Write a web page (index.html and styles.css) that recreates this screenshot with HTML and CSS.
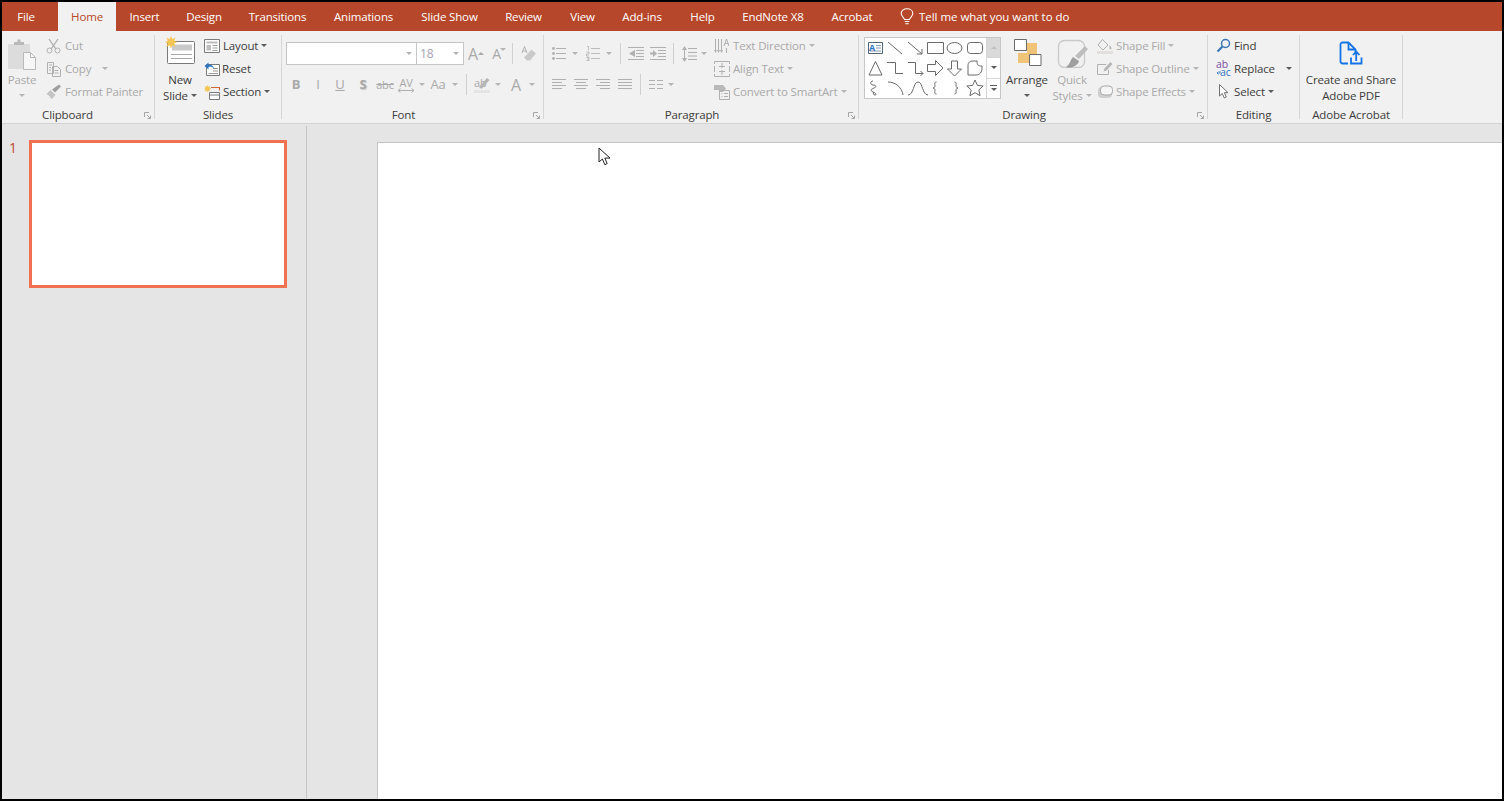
FILE: index.html
```html
<!DOCTYPE html>
<html lang="en">
<head>
    <meta charset="UTF-8">
    <title>PowerPoint</title>
    <link rel="stylesheet" href="styles.css">
</head>
<body>
<div class="app">
    <!-- Tab bar -->
    <nav class="tabs">
        <span class="tab">File</span>
        <span class="tab tab-home">Home</span>
        <span class="tab">Insert</span>
        <span class="tab">Design</span>
        <span class="tab">Transitions</span>
        <span class="tab">Animations</span>
        <span class="tab">Slide Show</span>
        <span class="tab">Review</span>
        <span class="tab">View</span>
        <span class="tab">Add-ins</span>
        <span class="tab">Help</span>
        <span class="tab">EndNote X8</span>
        <span class="tab">Acrobat</span>
        <span class="tell">
            <svg width="14" height="17" viewBox="0 0 14 17"><path d="M4.5 11.5C4.2 9.5 1.2 8.5 1.2 5.3 1.2 2.8 3.6.8 7 .8s5.8 2 5.8 4.5c0 3.2-3 4.2-3.3 6.2zM4.7 13.5h4.6M5.2 15.8h3.600" fill="none" stroke="#fff" stroke-width="1.1"/></svg>
            Tell me what you want to do
        </span>
    </nav>

    <!-- Ribbon -->
    <section class="ribbon">
        <div class="group g-clipboard">
            <div class="body">
                <div class="big off w-paste">
                    <div class="big-icon">
                        <svg class="top-4" width="32" height="32" viewBox="0 0 32 32"><path d="M2 6h22v25H2z" fill="#dcdcdc"/><path d="M8 7V4h3.5V1.5h3V4H18v3z" fill="#b9b9b9"/><path d="M17.500 14.5h7l5 5v12h-12z" fill="#f6f6f6" stroke="#b9b9b9"/><path d="M24.500 14.5v5h5" fill="none" stroke="#b9b9b9"/></svg>
                    </div>
                    <span class="line">Paste</span>
                    <span class="line"><i class="tri"></i></span>
                </div>
                <div class="col col-clip">
                    <div class="row off">
                        <svg class="ico" width="16" height="16" viewBox="0 0 16 16"><circle cx="3.5" cy="12.5" r="2.5" class="ln"/><circle cx="11.5" cy="12.5" r="2.5" class="ln"/><path d="M3 1l6.8 9.800M12 1L5.2 10.800" class="ln" stroke-width="1.3"/></svg>
                        Cut
                    </div>
                    <div class="row off">
                        <svg class="ico" width="16" height="16" viewBox="0 0 16 16"><path d="M1.5 1.5h6v11h-6zM6.5 5.5h5l3 3v7h-8zM3 4h3M3 6.5h2M3 9h2M8.5 9.5h4M8.5 12h4" class="ln"/></svg>
                        Copy <i class="tri tri-copy"></i>
                    </div>
                    <div class="row off">
                        <svg class="ico" width="16" height="16" viewBox="0 0 16 16"><path d="M.5 10l4-4 5 5-3.500 4-1.500-1.500-1 .5.5-1.500z" fill="#c4c4c4"/><path d="M6 5.5l3 3 6-6L13 .5z" fill="#9f9f9f"/></svg>
                        Format Painter
                    </div>
                </div>
            </div>
            <div class="label label-launch label-clip">Clipboard<svg class="launch" width="7" height="7" viewBox="0 0 7 7"><path d="M.5 5V.5H5M3 3l3.5 3.5M3.5 6.5h3v-3" class="launch-ln"/></svg></div>
        </div>

        <div class="group g-slides">
            <div class="body">
                <div class="big w-new">
                    <div class="big-icon">
                        <svg class="top-2" width="30" height="30" viewBox="0 0 30 30"><rect x="2.5" y="5.5" width="27" height="22" rx="1" fill="#fff" stroke="#7a7a7a"/><path d="M7 8.500h20v6H7z" fill="#c9c9c9"/><path d="M6 18.500h21M6 22.500h21" stroke="#a8a8a8" fill="none"/><path d="M6 0l1.400 3.300L10.500 1.500 9.200 5l3.300 1-3.300 1.400 1.300 3.300-3.200-1.500L6 12.500 4.700 9.200 1.500 10.700 2.800 7.400 0 6l2.800-1L1.500 1.500l3.100 1.800z" fill="#f6c453"/></svg>
                    </div>
                    <span class="line">New</span>
                    <span class="line">Slide <i class="tri dark"></i></span>
                </div>
                <div class="col col-slides">
                    <div class="row">
                        <svg class="ico" width="16" height="16" viewBox="0 0 16 16"><path d="M.5 1.5h15v13H.5z" fill="#fff" stroke="#7a7a7a"/><path d="M2.5 3.5h11v2h-11zM2.500 7h4.500v5.500H2.500z" fill="#bdbdbd"/><path d="M8.500 7.5h5M8.500 10h5M8.500 12.5h5" stroke="#9a9a9a"/></svg>
                        Layout <i class="tri dark"></i>
                    </div>
                    <div class="row row-reset">
                        <svg class="ico" width="16" height="16" viewBox="0 0 16 16"><path d="M2.5 3.5h13v11h-13z" fill="#fff" stroke="#7a7a7a"/><path d="M9 7.5h5M9 10h5M4.5 12.5h9.500" stroke="#9a9a9a"/><path d="M.5 5L4.5 1.5v2c3 0 5 1.300 5.500 4-1.300-1.500-3.200-1.800-5.500-1.600v2.600z" fill="#2f75c0"/></svg>
                        Reset
                    </div>
                    <div class="row">
                        <svg class="ico" width="16" height="16" viewBox="0 0 16 16"><path d="M3.5 1l.8 1.800L6.300 2 5.500 4l1.800.7-1.800.8.8 2L4.300 6.700 3.500 8.500 2.700 6.700l-2 .8.8-2L0 4.700 1.500 4 .7 2l2 .8z" fill="#f6c453"/><path d="M7 3.500h8.500v3" fill="none" stroke="#d2672f" stroke-width="1.200"/><path d="M5.500 8.500h10v7h-10zM5.500 11h10" fill="#fff" stroke="#7a7a7a"/></svg>
                        Section <i class="tri dark"></i>
                    </div>
                </div>
            </div>
            <div class="label">Slides</div>
        </div>

        <div class="group g-font">
            <div class="body body-stack">
                <div class="tools font-top off">
                    <div class="combo"><i class="tri"></i></div>
                    <div class="combo combo-size"><span class="combo-val">18</span><i class="tri"></i></div>
                    <span class="glyph glyph-lg">A<i class="tri tri-up"></i></span>
                    <span class="glyph glyph-md">A<i class="tri tri-sup"></i></span>
                    <i class="sep"></i>
                    <svg width="16" height="16" viewBox="0 0 16 16"><path d="M6 14.500l-3-3 7.500-8 4.500 4-6 7z" fill="#c9c9c9"/><path d="M1 7l2.500-6.500L6 7M2 5h3" class="ln"/></svg>
                </div>
                <div class="tools font-bottom off">
                    <b class="glyph">B</b>
                    <em class="glyph">I</em>
                    <u class="glyph">U</u>
                    <b class="glyph glyph-shadow">S</b>
                    <s class="glyph glyph-sm">abc</s>
                    <span class="glyph glyph-av">AV<svg width="18" height="5" viewBox="0 0 18 5"><path d="M1 2.500h16M3.500.5l-2.500 2 2.500 2M14.500.5l2.500 2-2.500 2" class="ln"/></svg></span>
                    <i class="tri"></i>
                    <span class="glyph glyph-aa">Aa</span>
                    <i class="tri"></i>
                    <i class="sep"></i>
                    <span class="glyph glyph-hl">ab<svg width="16" height="16" viewBox="0 0 16 16"><path d="M5 10L13 1l2.500 2-8 9z" fill="#b5b5b5"/><path d="M0 13h16v3H0z" fill="#e4e4e4"/></svg></span>
                    <i class="tri"></i>
                    <span class="glyph glyph-lg">A</span>
                    <i class="tri"></i>
                </div>
            </div>
            <div class="label label-launch">Font<svg class="launch" width="7" height="7" viewBox="0 0 7 7"><path d="M.5 5V.5H5M3 3l3.5 3.5M3.5 6.5h3v-3" class="launch-ln"/></svg></div>
        </div>

        <div class="group g-para">
            <div class="body">
                <div class="body-stack para-left">
                    <div class="tools para-top">
                        <svg width="14" height="15" viewBox="0 0 14 15"><path d="M4 2.500h10M4 7.500h10M4 12.500h10" class="ln"/><circle cx="1.5" cy="2.5" r="1.4" fill="#b0b0b0"/><circle cx="1.5" cy="7.5" r="1.4" fill="#b0b0b0"/><circle cx="1.5" cy="12.5" r="1.4" fill="#b0b0b0"/></svg>
                        <i class="tri"></i>
                        <svg width="14" height="15" viewBox="0 0 14 15"><path d="M5 2.500h9M5 7.500h9M5 12.500h9M1 .5h1.500v4M.5 6h2.500v2H.5v2H3M.5 11.500H3v3H.5M1 13h2" class="ln" stroke-width=".8"/></svg>
                        <i class="tri"></i>
                        <i class="sep"></i>
                        <svg width="16" height="13" viewBox="0 0 16 13"><path d="M0 .5h16M8 3.500h8M8 6.500h8M8 9.500h8M0 12.500h16" class="ln"/><path d="M7 3v7L1 6.500z" fill="#b0b0b0"/></svg>
                        <svg width="16" height="13" viewBox="0 0 16 13"><path d="M0 .5h16M8 3.500h8M8 6.500h8M8 9.500h8M0 12.500h16" class="ln"/><path d="M0 5.500h3V3l4 3.500L3 10V7.500H0z" fill="#b0b0b0"/></svg>
                        <i class="sep"></i>
                        <svg width="15" height="16" viewBox="0 0 15 16"><path d="M6 2.500h9M6 6.500h9M6 10h9M6 13.500h9M2.500 2v12" class="ln"/><path d="M0 4l2.500-4L5 4zM0 12l2.500 4L5 12z" fill="#b0b0b0"/></svg>
                        <i class="tri"></i>
                    </div>
                    <div class="tools para-bottom">
                        <svg width="14" height="12" viewBox="0 0 14 12"><path d="M0 .5h14M0 3.500h10M0 6.500h14M0 9.500h10" class="ln"/></svg>
                        <svg width="14" height="12" viewBox="0 0 14 12"><path d="M0 .5h14M2 3.500h10M0 6.500h14M2 9.500h10" class="ln"/></svg>
                        <svg width="14" height="12" viewBox="0 0 14 12"><path d="M0 .5h14M4 3.500h10M0 6.500h14M4 9.500h10" class="ln"/></svg>
                        <svg width="14" height="12" viewBox="0 0 14 12"><path d="M0 .5h14M0 3.500h14M0 6.500h14M0 9.500h14" class="ln"/></svg>
                        <i class="sep"></i>
                        <svg width="14" height="12" viewBox="0 0 14 12"><path d="M0 1.500h6M8 1.500h6M0 5.500h6M8 5.500h6M0 9.500h6M8 9.500h6" class="ln"/></svg>
                        <i class="tri"></i>
                    </div>
                </div>
                <div class="col">
                    <div class="row off">
                        <svg class="ico" width="16" height="16" viewBox="0 0 16 16"><path d="M1.5 1v13M4.5 1v13M7.5 1v13" class="ln"/><path d="M0 12l1.500 3 1.500-3zM3 12l1.500 3L6 12zM6 12l1.500 3L9 12z" fill="#b0b0b0"/><path d="M10 8l2.500-7L15 8M11 5.500h3M12.500 10v5" class="ln"/></svg>
                        Text Direction <i class="tri"></i>
                    </div>
                    <div class="row off">
                        <svg class="ico" width="16" height="16" viewBox="0 0 16 16"><path d="M.5 3V.5h15V3M.5 5v6M15.500 5v6M.5 13v2.500h15V13M5 5.500h6M5 10.500h6M8 2v5M8 9v5" class="ln"/></svg>
                        Align Text <i class="tri"></i>
                    </div>
                    <div class="row off">
                        <svg class="ico" width="16" height="16" viewBox="0 0 16 16"><path d="M0 1h9l3 3.500-3 3.500H5V6H0z" fill="#b9b9b9"/><path d="M5.500 6.500h10v9h-10zM7.500 9.500h1M10 9.500h4M7.500 12.500h1M10 12.500h4" class="ln"/></svg>
                        Convert to SmartArt <i class="tri"></i>
                    </div>
                </div>
            </div>
            <div class="label label-launch">Paragraph<svg class="launch" width="7" height="7" viewBox="0 0 7 7"><path d="M.5 5V.5H5M3 3l3.5 3.5M3.5 6.5h3v-3" class="launch-ln"/></svg></div>
        </div>

        <div class="group g-draw">
            <div class="body">
                <div class="gallery">
                    <svg class="shapes" width="121" height="60" viewBox="0 0 121 60">
                        <g fill="none" stroke="#6a6a6a">
                            <path d="M3.500 4.500h14v11h-14z" stroke="#50647c" fill="#fff"/>
                            <path d="M11 7.500h5M11 10h5M5 13h11" stroke="#8a9bb0"/>
                            <path d="M23 4l14 12M43 4l14 12M57 16h-5M57 16v-5"/>
                            <path d="M62.500 4.500h16v11h-16z"/>
                            <ellipse cx="89.5" cy="10" rx="7.5" ry="5.5"/>
                            <rect x="102.5" y="4.5" width="15" height="11" rx="3"/>
                            <path d="M10.500 23.500L4 37h13z"/>
                            <path d="M22 24.500h8.500v11H38M43 24.500h7.500v11H58M55.500 33l2.500 2.500-2.500 2.500"/>
                            <path d="M62.500 26.500h8v-4l7.500 7.500-7.500 7.500v-4h-8z"/>
                            <path d="M86.500 23h6v8h4l-7 7-7-7h4z"/>
                            <path d="M103 37V28c0-4 2-5 5-5h4c0 4 1 5 5 5v2c0 4-2 7-6 7z"/>
                            <path d="M8 43c-3 0-3 4 0 4s4 2 1 3-4 3-1 4 4 3 2 3-2-2-1-3"/>
                            <path d="M23 44c7 0 14 5 15 13"/>
                            <path d="M43 57c6 0 5-13 10-13s4 13 10 13"/>
                            <path d="M71.500 44c-2.500 0-1.500 2.500-1.500 4 0 1-1 2-2 2 1 0 2 1 2 2 0 1.500-1 4 1.500 4M89.500 44c2.500 0 1.500 2.500 1.500 4 0 1 1 2 2 2-1 0-2 1-2 2 0 1.500 1 4-1.500 4"/>
                            <path d="M110 42l2.400 5.400 5.800.6-4.400 3.900 1.300 5.800-5.100-3-5.100 3 1.300-5.800-4.400-3.900 5.800-.6z"/>
                        </g>
                        <text x="7" y="13" class="shape-a">A</text>
                    </svg>
                    <div class="scroll">
                        <div class="scroll-cell scroll-up"><i class="tri tri-up tri-pale"></i></div>
                        <div class="scroll-cell"><i class="tri dark"></i></div>
                        <div class="scroll-cell scroll-more"><i class="bar"></i><i class="tri dark"></i></div>
                    </div>
                </div>
                <div class="big w-arrange">
                    <div class="big-icon">
                        <svg class="top-4" width="30" height="30" viewBox="0 0 30 30"><path d="M15 5h10v11H15zM6 15h11v10H6z" fill="#f0c477"/><path d="M2.500 1.500h12v11h-12zM17.500 16.500h11.500v11H17.500z" fill="#fff" stroke="#6a6a6a"/></svg>
                    </div>
                    <span class="line">Arrange</span>
                    <span class="line"><i class="tri dark"></i></span>
                </div>
                <div class="big off w-quick">
                    <div class="big-icon">
                        <svg class="top-2" width="32" height="32" viewBox="0 0 32 32"><rect x="2.5" y="4.500" width="26" height="27" rx="6" fill="none" stroke="#c9c9c9" stroke-width="1.300"/><path d="M29 10l3 3-9 10-4-3z" fill="#bdbdbd"/><path d="M17 21l6 4c-1 5-9 8-13 6 4-2 4-7 7-10z" fill="#9f9f9f"/></svg>
                    </div>
                    <span class="line">Quick</span>
                    <span class="line">Styles <i class="tri"></i></span>
                </div>
                <div class="col col-shape">
                    <div class="row off">
                        <svg class="ico" width="16" height="16" viewBox="0 0 16 16"><path d="M5.500 1.500l5.500 5.500-5 5-5-5z" class="ln"/><path d="M12.500 7c1 1.500 2 2.500 2 3.500s-2 1-2 0 0-2 0-3.500z" fill="#b0b0b0"/><path d="M0 13h16v3H0z" fill="#e4dfdf"/></svg>
                        Shape Fill <i class="tri"></i>
                    </div>
                    <div class="row off">
                        <svg class="ico" width="16" height="16" viewBox="0 0 16 16"><path d="M9 3.500H.5v10h11V9" class="ln"/><path d="M13.500 1l2 2-6 6.500-3 1 1-3z" fill="#b5b5b5"/></svg>
                        Shape Outline <i class="tri"></i>
                    </div>
                    <div class="row off">
                        <svg class="ico" width="16" height="16" viewBox="0 0 16 16"><rect x="1" y="3" width="14" height="11" rx="4" fill="#cfcfcf"/><rect x="3.5" y="2" width="12" height="9" rx="3.5" fill="#f6f6f6" stroke="#a8a8a8"/></svg>
                        Shape Effects <i class="tri"></i>
                    </div>
                </div>
            </div>
            <div class="label label-launch">Drawing<svg class="launch" width="7" height="7" viewBox="0 0 7 7"><path d="M.5 5V.5H5M3 3l3.5 3.5M3.5 6.5h3v-3" class="launch-ln"/></svg></div>
        </div>

        <div class="group g-edit">
            <div class="body">
                <div class="col col-edit">
                    <div class="row">
                        <svg class="ico" width="15" height="15" viewBox="0 0 15 15"><circle cx="9.5" cy="5.5" r="4" fill="none" stroke="#3a76b5" stroke-width="1.5"/><path d="M6.500 8.500L1.500 13.500" stroke="#3a76b5" stroke-width="2.2"/></svg>
                        Find
                    </div>
                    <div class="row">
                        <svg class="ico replace-ico" width="15" height="15" viewBox="0 0 15 15"><text x="0" y="7" class="abac ab">ab</text><text x="4" y="15" class="abac ac">ac</text><path d="M4 10v2H1M2.500 10.500L1 12l1.500 1.500" fill="none" stroke="#2f75c0" stroke-width=".8"/></svg>
                        Replace <i class="tri dark tri-end"></i>
                    </div>
                    <div class="row">
                        <svg class="ico" width="15" height="15" viewBox="0 0 15 15"><path d="M3.500 .5v11.500l2.800-2.500 2 4.500 2-1-2-4.300h3.700z" fill="#fff" stroke="#707070"/></svg>
                        Select <i class="tri dark"></i>
                    </div>
                </div>
            </div>
            <div class="label">Editing</div>
        </div>

        <div class="group g-acro">
            <div class="body">
                <div class="big w-acro">
                    <div class="big-icon">
                        <svg class="top-7" width="24" height="26" viewBox="0 0 24 26"><path d="M9 22.500H3.500a2 2 0 0 1-2-2v-17a2 2 0 0 1 2-2h6l7 7v2.500" fill="none" stroke="#1473e6" stroke-width="1.8"/><path d="M9.500 2v6.500H16.500" fill="none" stroke="#1473e6" stroke-width="1.8"/><path d="M12 16.500v6h10.500v-6" fill="none" stroke="#1473e6" stroke-width="1.8"/><path d="M17.200 20v-9M14 14l3.200-3.500 3.200 3.500" fill="none" stroke="#1473e6" stroke-width="1.8"/></svg>
                    </div>
                    <span class="line">Create and Share</span>
                    <span class="line">Adobe PDF</span>
                </div>
            </div>
            <div class="label">Adobe Acrobat</div>
        </div>
    </section>

    <!-- Slide sorter and canvas -->
    <main class="workspace">
        <aside class="thumbs">
            <span class="thumb-num">1</span>
            <div class="thumb"></div>
        </aside>
        <div class="canvas">
            <div class="slide"></div>
        </div>
    </main>

    <svg class="cursor" width="14" height="19" viewBox="0 0 14 19"><path d="M1 1v14l3.400-3 2.400 5.600 2.400-1-2.400-5.500H12z" fill="#fff" stroke="#222"/></svg>
</div>
</body>
</html>
```

FILE: styles.css
```css
* {
    box-sizing: border-box;
}

html, body {
    margin: 0;
    height: 100%;
}

body {
    font-family: "Open Sans", "Noto Sans", "Liberation Sans", sans-serif;
    font-size: 11.5px;
    letter-spacing: -0.15px;
    color: #3c3c3c;
    background: #000;
    overflow: hidden;
}

.app {
    position: relative;
    width: 1504px;
    height: 801px;
    border: 2px solid #000;
    display: flex;
    flex-direction: column;
    background: #e5e5e5;
}

/* tab bar */
.tabs {
    flex: none;
    height: 29px;
    background: #b7472a;
    color: #fff;
    display: grid;
    grid-template-columns: 48px 66px 57px 62px 85px 87px 85px 63px 55px 64px 57px 84px 74px auto;
    align-items: stretch;
}

.tab {
    display: flex;
    align-items: center;
    justify-content: center;
}

.tab-home {
    margin-left: 8px;
    background: #f1f1f1;
    color: #b7472a;
}

.tell {
    display: flex;
    align-items: center;
    gap: 5px;
    padding-left: 11px;
    letter-spacing: -0.03px;
}

/* ribbon */
.ribbon {
    flex: none;
    height: 93px;
    padding-top: 4px;
    background: #f1f1f1;
    border-bottom: 1px solid #d2d2d2;
    display: flex;
    align-items: flex-start;
}

.group {
    position: relative;
    flex: none;
    height: 84px;
    border-right: 1px solid #d6d6d6;
}

.g-clipboard { width: 153px; padding-left: 2px; }
.g-slides { width: 127px; padding-left: 6px; }
.g-font { width: 262px; padding-left: 4px; }
.g-para { width: 315px; padding-left: 4px; }
.g-draw { width: 349px; padding-left: 5px; }
.g-edit { width: 92px; padding-left: 8px; }
.g-acro { width: 103px; }

.body {
    display: flex;
    height: 72px;
    margin-top: -1px;
}

.body-stack {
    display: flex;
    flex-direction: column;
}

.label {
    position: absolute;
    left: 0;
    right: 0;
    bottom: -4px;
    height: 16px;
    line-height: 16px;
    text-align: center;
}

.label-launch {
    padding-right: 18px;
}

.label-clip {
    padding-right: 21px;
}

.launch {
    position: absolute;
    right: 3px;
    top: 5px;
}

.launch-ln {
    fill: none;
    stroke: #a6a6a6;
}

/* large buttons */
.big {
    flex: none;
    display: flex;
    flex-direction: column;
    align-items: center;
}

.big-icon {
    height: 37px;
    display: flex;
    align-items: flex-start;
    justify-content: center;
}

.top-2 { margin-top: 2px; }
.top-4 { margin-top: 4px; }
.top-7 { margin-top: 7px; }

.line {
    display: flex;
    align-items: center;
    justify-content: center;
    gap: 3px;
    height: 16px;
    white-space: nowrap;
}

.w-paste { width: 36px; }
.w-new { width: 38px; }
.w-arrange { width: 40px; margin-left: 6px; }
.w-quick { width: 38px; margin-left: 6px; }
.w-acro { width: 102px; }

/* small button columns */
.col {
    display: flex;
    flex-direction: column;
}

.col-clip { margin-left: 6px; }
.col-slides { margin-left: 5px; }
.col-shape { margin-left: 6px; }
.col-edit { width: 76px; }

.row {
    display: flex;
    align-items: center;
    gap: 3px;
    height: 23px;
    white-space: nowrap;
}

.row-reset {
    gap: 2px;
}

.ico {
    flex: none;
}

.off {
    color: #a9a9a9;
}

.ln {
    fill: none;
    stroke: #b0b0b0;
}

/* dropdown carets */
.tri {
    display: inline-block;
    flex: none;
    width: 0;
    height: 0;
    border-left: 3px solid transparent;
    border-right: 3px solid transparent;
    border-top: 3px solid #b5b5b5;
}

.tri.dark {
    border-top-color: #5c5c5c;
}

.tri-up {
    border-top: 0;
    border-bottom: 3px solid #a9a9a9;
}

.tri-sup {
    margin: -8px 0 0 -1px;
}

.tri-copy {
    margin-left: 8px;
}

.tri-end {
    margin-left: auto;
}

/* tool rows in Font and Paragraph */
.tools {
    display: grid;
    align-items: center;
    justify-items: center;
    height: 23px;
}

.font-top {
    margin-top: 8px;
    grid-template-columns: 131px 47px 24px 22px 4px 29px;
}

.font-bottom {
    margin-top: 8px;
    grid-template-columns: 20px 24px 20px 26px 18px 24px 7px 26px 8px 14px 18px 14px 22px 10px;
}

.para-top {
    margin-top: 8px;
    grid-template-columns: 22px 10px 26px 6px 16px 16px 27px 5px 26px 4px;
}

.para-bottom {
    margin-top: 8px;
    grid-template-columns: 22px 22px 22px 22px 8px 24px 6px;
}

.para-left {
    width: 166px;
}

.sep {
    display: block;
    width: 1px;
    height: 21px;
    background: #d0d0d0;
}

.combo {
    justify-self: stretch;
    height: 23px;
    display: flex;
    align-items: center;
    justify-content: flex-end;
    padding-right: 4px;
    background: #fff;
    border: 1px solid #c6c6c6;
}

.combo-size {
    border-left: 0;
    justify-content: space-between;
    padding-left: 3px;
}

.combo-val {
    color: #a6a3b5;
    font-size: 12px;
}

.glyph {
    display: flex;
    align-items: center;
    font-size: 13px;
    font-style: normal;
    line-height: 1;
    color: #a9a9a9;
}

.glyph-lg {
    font-size: 16px;
}

.glyph-md {
    font-size: 14px;
}

.glyph-sm {
    font-size: 11px;
}

.glyph-shadow {
    text-shadow: 1px 1px 1px #c8c8c8;
}

.glyph-av {
    flex-direction: column;
    font-size: 11px;
}

.glyph-aa {
    font-size: 13px;
}

.glyph-hl {
    position: relative;
    width: 16px;
    font-size: 11px;
    align-self: center;
    height: 16px;
    align-items: flex-start;
}

.glyph-hl svg {
    position: absolute;
    left: 0;
    top: 0;
}

/* shapes gallery */
.gallery {
    flex: none;
    display: flex;
    width: 137px;
    height: 62px;
    margin-top: 3px;
    background: #fff;
    border: 1px solid #c6c6c6;
}

.shapes {
    flex: none;
}

.shape-a {
    font-size: 9px;
    font-weight: 700;
    fill: #2f75c0;
    text-anchor: middle;
}

.scroll {
    flex: 1;
    display: flex;
    flex-direction: column;
    border-left: 1px solid #d6d6d6;
}

.scroll-cell {
    flex: 1;
    display: flex;
    flex-direction: column;
    align-items: center;
    justify-content: center;
    gap: 2px;
    border-bottom: 1px solid #d6d6d6;
}

.scroll-cell:last-child {
    border-bottom: 0;
}

.scroll-up {
    background: #d9d9d9;
}

.tri-pale {
    border-bottom-color: #c0c0c0;
}

.bar {
    display: block;
    width: 7px;
    height: 1px;
    background: #5c5c5c;
}

/* ab/ac replace icon */
.replace-ico {
    overflow: visible;
}

.abac {
    font-size: 10.5px;
}

.ab {
    fill: #7b4fa3;
}

.ac {
    fill: #2f75c0;
}

/* slide area */
.workspace {
    flex: 1;
    min-height: 0;
    display: flex;
    padding-top: 2px;
}

.thumbs {
    flex: none;
    display: flex;
    align-items: flex-start;
    width: 305px;
    padding: 14px 0 0 7px;
    border-right: 1px solid #c6c6c6;
}

.thumb-num {
    width: 20px;
    color: #c0492b;
    font-size: 14px;
    line-height: 16px;
}

.thumb {
    width: 258px;
    height: 148px;
    background: #fff;
    border: 3px solid #f0714f;
}

.canvas {
    flex: 1;
    padding: 16px 0 0 70px;
}

.slide {
    height: 100%;
    background: #fff;
    border: 1px solid #c6c6c6;
    border-width: 1px 0 0 1px;
}

.cursor {
    position: absolute;
    left: 596px;
    top: 145px;
}
```
